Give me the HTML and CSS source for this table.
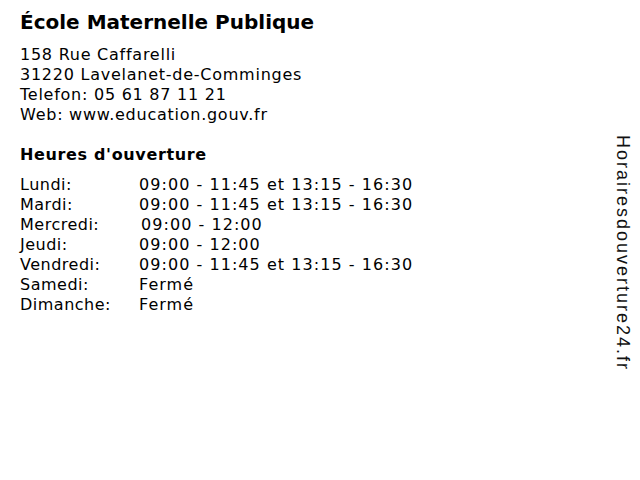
FILE: index.html
```html
<!DOCTYPE html>
<html lang="fr">
<head>
<meta charset="utf-8">
<title>École Maternelle Publique</title>
<link rel="stylesheet" href="styles.css">
</head>
<body>
<div class="page">
  <main class="info">
    <h1 class="title">École Maternelle Publique</h1>
    <div class="address">
      <div>158 Rue Caffarelli</div>
      <div>31220 Lavelanet-de-Comminges</div>
      <div>Telefon: 05 61 87 11 21</div>
      <div>Web: www.education.gouv.fr</div>
    </div>
    <h2 class="subtitle">Heures d'ouverture</h2>
    <div class="hours">
      <span class="day">Lundi:</span><span class="time">09:00 - 11:45 et 13:15 - 16:30</span>
      <span class="day">Mardi:</span><span class="time">09:00 - 11:45 et 13:15 - 16:30</span>
      <span class="day">Mercredi:</span><span class="time shift">09:00 - 12:00</span>
      <span class="day">Jeudi:</span><span class="time">09:00 - 12:00</span>
      <span class="day">Vendredi:</span><span class="time">09:00 - 11:45 et 13:15 - 16:30</span>
      <span class="day">Samedi:</span><span class="time">Fermé</span>
      <span class="day">Dimanche:</span><span class="time">Fermé</span>
    </div>
  </main>
  <aside class="brand">Horairesdouverture24.fr</aside>
</div>
</body>
</html>
```
FILE: styles.css
```css
html, body {
  margin: 0;
  padding: 0;
  background: #ffffff;
}
body {
  font-family: "DejaVu Sans", Verdana, sans-serif;
  color: #000000;
  width: 640px;
  height: 480px;
}
.page {
  display: flex;
  justify-content: space-between;
  padding: 0 7px 0 20px;
}
.info {
  padding-top: 9px;
}
.title {
  margin: 0;
  font-size: 20px;
  font-weight: bold;
  line-height: 26px;
}
.address {
  margin-top: 10px;
  font-size: 16px;
  line-height: 20px;
  letter-spacing: 0.75px;
}
.subtitle {
  margin: 20px 0 0;
  font-size: 16px;
  font-weight: bold;
  line-height: 20px;
  letter-spacing: 0.65px;
}
.hours {
  margin-top: 10px;
  display: grid;
  grid-template-columns: 119px auto;
  font-size: 16px;
  line-height: 20px;
}
.day {
  letter-spacing: 0.5px;
}
.time {
  letter-spacing: 1.05px;
}
.shift {
  padding-left: 2px;
}
.brand {
  margin-top: 135px;
  writing-mode: vertical-rl;
  font-family: "Liberation Sans", Arial, sans-serif;
  font-size: 18px;
  letter-spacing: 2px;
  line-height: 20px;
  color: #111111;
  height: 240px;
}
```
